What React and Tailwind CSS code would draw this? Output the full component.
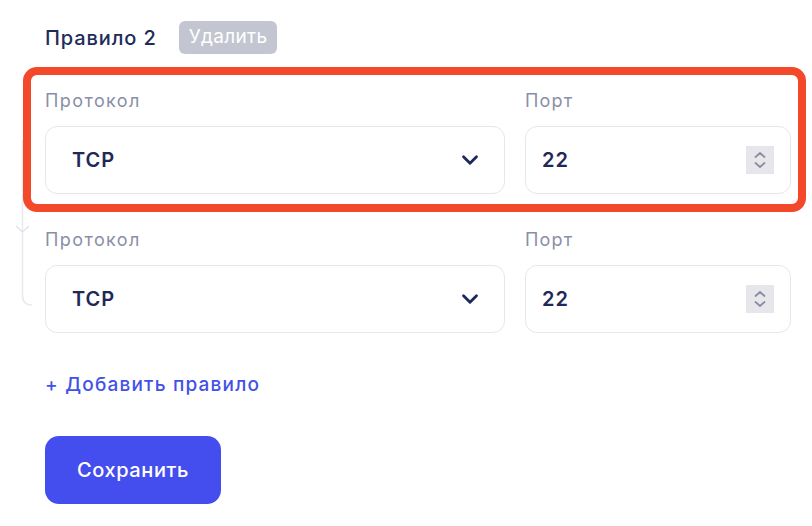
import { ChevronDown } from 'lucide-react';

const font = { fontFamily: 'Inter, "Noto Sans", sans-serif' };

const RuleRow = () => (
    <div className="flex gap-5">
        <div className="flex flex-col w-[460px]">
            <label className="text-[18px] leading-[24px] tracking-[1.4px] text-[#8a8fa7] mb-[13px]">Протокол</label>
            <div className="h-[68px] rounded-[12px] border border-[#e6e7ec] bg-white flex items-center justify-between pl-[26px] pr-[21px]">
                <span className="text-[20px] font-semibold tracking-[1px] text-[#1e2957]">TCP</span>
                <ChevronDown size={26} strokeWidth={2.6} className="text-[#1e2957]" />
            </div>
        </div>
        <div className="flex flex-col w-[266px]">
            <label className="text-[18px] leading-[24px] tracking-[1.2px] text-[#8a8fa7] mb-[13px]">Порт</label>
            <div className="h-[68px] rounded-[12px] border border-[#e6e7ec] bg-white flex items-center justify-between pl-[16px] pr-[16px]">
                <span className="text-[20px] font-semibold tracking-[1px] text-[#1e2957]">22</span>
                <div className="w-[28px] h-[28px] bg-[#e7e7eb] flex flex-col items-center justify-center text-[#8c8ea3]">
                    <svg width="14" height="22" viewBox="0 0 14 22" fill="none" stroke="currentColor" strokeWidth="1.8" strokeLinecap="round" strokeLinejoin="round">
                        <path d="M2.5 8l4.5-4 4.5 4" />
                        <path d="M2.5 14l4.5 4 4.5-4" />
                    </svg>
                </div>
            </div>
        </div>
    </div>
);

const App = () => (
    <div className="relative w-[812px] h-[526px] bg-white overflow-hidden" style={font}>
        {/* faint connector line on the left */}
        <svg className="absolute left-[12px] top-[140px]" width="30" height="170" viewBox="0 0 30 170" fill="none" stroke="#e8e9ee" strokeWidth="1.5">
            <path d="M10.5 0 V155 Q10.5 165 20 165" />
            <path d="M4 86l6.5 6 6.5-6" stroke="#e1e3ea" />
        </svg>

        <div className="relative pl-[45px] pt-[21px]">
            <div className="flex items-center gap-[22px] h-[33px]">
                <h2 className="text-[20px] font-medium text-[#202b5a] tracking-[0.9px]">Правило 2</h2>
                <span className="h-[33px] px-[10px] rounded-[6px] bg-[#c3c6d1] text-white text-[19px] tracking-[0.3px] flex items-center">Удалить</span>
            </div>

            <div className="-ml-[22px] mt-[13px] w-[783px] border-[8px] border-[#f4482a] rounded-[14px] pl-[14px] pt-[14px] pb-[10px]">
                <RuleRow />
            </div>

            <div className="mt-[16px]">
                <RuleRow />
            </div>

            <button className="mt-[38px] text-[19px] font-medium tracking-[1.2px] text-[#4351e8]">+ Добавить правило</button>

            <div className="mt-[36px]">
                <button className="w-[176px] h-[68px] rounded-[14px] bg-[#444ded] text-white text-[20px] font-medium tracking-[0.6px]">Сохранить</button>
            </div>
        </div>
    </div>
);

export default App;
